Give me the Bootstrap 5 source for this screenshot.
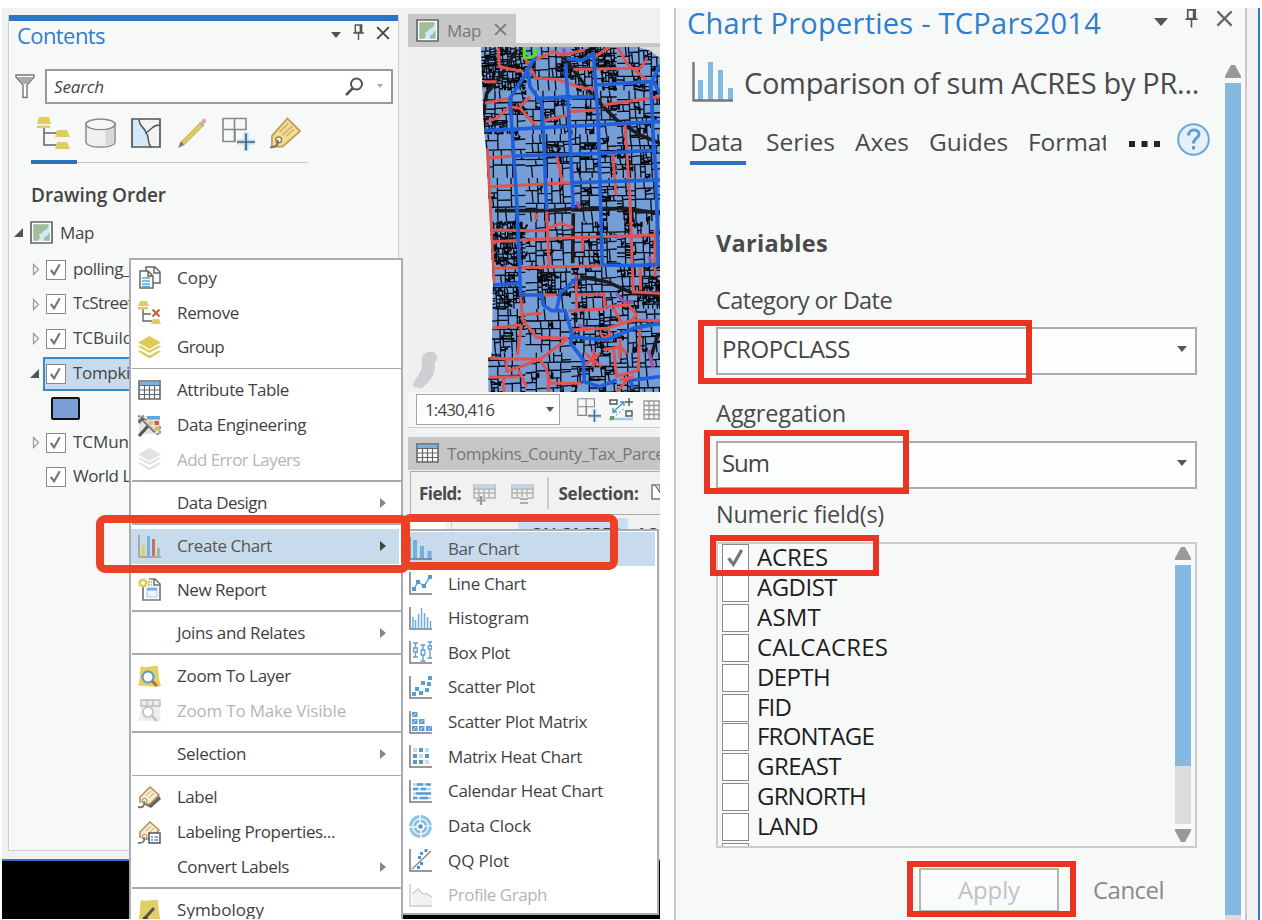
<!DOCTYPE html>
<html lang="en">
<head>
<meta charset="utf-8">
<meta name="viewport" content="width=device-width, initial-scale=1">
<title>Create Chart - Bar Chart</title>
<link href="https://cdn.jsdelivr.net/npm/bootstrap@5.3.0/dist/css/bootstrap.min.css" rel="stylesheet">
<style>
body{width:1262px;height:920px;overflow:hidden;background:#fff;font-family:"Open Sans","Noto Sans",sans-serif;font-size:17px;line-height:1;color:#444}
svg{display:block;flex:none}
[data-w]{white-space:pre;display:inline-block}
.desk{width:658px;height:911px;margin:8px 0 0 2px;background:#000}
.app{height:851px;background:#f1f1f1;padding:6px 0 0 6px;gap:9px}
.app-edge{height:2px;background:#2f75c8}
.contents{width:391px;height:836px;background:#f7f9f9;border:1px solid #cfcfcf;border-top:0;margin-top:1px}
.accent{height:6px;background:#2f73c6}
.c-title{height:31px;padding:0 8px 4px}
.c-title>span{font-size:22px;color:#2f7dcb}
.c-search{height:34px;margin:17px 5px 0 6px}
.searchbox{width:348px;height:35px;border:2px solid #999;background:#fff;padding:0 8px 0 7px}
.tools{width:277px;margin:14px 0 0 22px;height:46px;padding-left:6px;border-bottom:1px solid #c6c6c6;gap:14.6px;position:relative}
.tools::after{content:"";position:absolute;left:0;bottom:-2px;width:46px;height:4px;background:#2c73ba}
.heading{margin:17px 0 0 22px;height:30px;font-size:19px;font-weight:600}
.tree-row{height:34.6px;padding-left:23px;color:#444}
.tree-name{margin-left:7px;width:58px;height:26px;line-height:24px;white-space:nowrap}
.tree-sel{margin-left:34px;width:90px;height:34px;border:2px solid #3a8acb;background:#c8dbed;padding-left:1px}
.cbx{width:20px;height:20px;border:1.6px solid #888;background:#fff;flex:none}
.swatch{width:29px;height:23px;border:2px solid #111;border-radius:2px;background:#7d9fd6;margin-left:42px}
.mapcol{width:252px}
.maptab{width:108px;height:29px;background:#c8c8c8;padding:3px 0 0 8px;color:#777}
.mapline{height:4px;background:#c8c8c8}
.maptools{height:36px;background:#f6f8f8;border-bottom:1px solid #ccc;padding-left:8px}
.scale{width:144px;height:31px;background:#fff;border:1.5px solid #a5a5a5;padding:0 9px 0 8px}
.tbltab{height:33px;margin-top:9px;background:#c6c6c6;padding-left:8px;color:#777;overflow:hidden}
.fieldbar{height:44px;margin:1px 0 0 2px;border:1.5px solid #aaa;border-right:0;padding-left:8px;font-weight:700;overflow:hidden;color:#4a4a4a}
.heads{height:60px;margin:3px 0 0 3px;font-weight:600;color:#333}
.heads>div{padding-top:7px;height:40px;white-space:nowrap;flex:none}
.menu{position:absolute;background:#fff;border:2px solid #a8adb3}
.menu1{left:127px;top:250px;width:274px;height:661px;overflow:hidden;padding-top:.6px;border-bottom:0}
.menu2{left:399px;top:521px;width:258px;height:386px;padding-top:.6px}
.mi{height:34.65px;padding:0 15px 0 7px;gap:16px;color:#3f3f3f}
.menu2 .mi{padding-left:6px}
.mi>span{margin-top:-1px}
.mi>i{width:23px;flex:none}
.mi.off{color:#b5b5b5}
.mi.on{background:#c8dbec;margin-right:2px;padding-right:13px;color:#555}
.mi .arr{margin-left:auto;border:5px solid transparent;border-left:6px solid #888;border-right:0}
.mi.on .arr{border-left-color:#444}
.rule{height:8.66px;padding:3px 0 0 1px}
.rule::before{content:"";display:block;height:1.6px;background:#aaa}
.hl{position:absolute;border:8px solid #ed4127;border-radius:9px}
.tri{border:6px solid transparent;border-top:6px solid #555;border-bottom:0}
.props{width:586px;height:912px;margin:8px 0 0 14px}
.pane{width:573px;background:#f7f9f9;border:solid #cacaca;border-width:0 2px}
.edge{width:13px;background:#f2f2f4;border-right:2px solid #2f7dcb}
.hl2{position:absolute;border:6px solid #ea3323}
.p-title{height:32px;padding:0 0 4px 11px;color:#2f7dcb;font-size:29px}
.p-main{width:549px}
.p-head{height:78px;padding:0 0 0 16px;font-size:29px;color:#4a4a4a}
.p-tabs{height:48px;margin-left:14px;font-size:24.5px;color:#4a4a4a;position:relative}
.p-tabs::after{content:"";position:absolute;left:0;top:43px;width:56px;height:4px;background:#2b72bd}
.p-tabs .fmt{width:78px;overflow:hidden;height:36px;line-height:36px}
.lbl{margin-left:40px;font-size:23.5px;color:#4a4a4a;white-space:nowrap}
.sel{width:481px;height:48px;margin-left:40px;border:2px solid #acacac;background:#fcfdfd;font-size:24px;padding:0 8px 4px 4px;position:relative}
.fields{width:481px;height:306px;margin-left:40px;border:2px solid #ccc;position:relative}
.fbox{height:302px;overflow:hidden;padding-left:4px;font-size:24px;color:#1e1e1e}
.frow{height:29.85px;gap:8px}
.frow>b{width:27px;height:28px;border:1.7px solid #8a8a8a;background:#fff;flex:none;margin-top:-1px}
.frow>span{margin-top:-3px}
.vbar{width:16px;background:#85b9e2}
.apply{width:140px;height:44px;border:2px solid #b5b5b5;background:#fafcfc;font-size:24px;color:#c2c2c2;margin-left:243px}
</style>
</head>
<body class="d-flex">

<svg width="0" height="0" class="position-absolute" aria-hidden="true">
<defs>
<symbol id="mapi" viewBox="0 0 23 23"><path d="M1 1h21v21H1z" fill="#fff" stroke="#666" stroke-width="1.7"/><path d="M3.300 3.300h16.400v16.400H3.300z" fill="#d3e8f5"/><path d="M3.300 3.300H19l-2 5-4 2-1 2-3 1 1 3-2 3.400H3.300zM14 19.700v-3l3-2 2.700-4v9z" fill="#9fbf9a"/></symbol>
<symbol id="pin" viewBox="0 0 12 15"><path d="M3 1h6v7H3zM1 8.500h10M6 9v6M7.700 1v7" fill="none" stroke="#555" stroke-width="1.300"/></symbol>
<symbol id="xx" viewBox="0 0 12 12"><path d="M1 1l10 10M11 1L1 11" fill="none" stroke="currentColor" stroke-width="1.600"/></symbol>
<symbol id="tick" viewBox="0 0 18 18"><path d="M4 9.500l3.500 4.500L13.500 3.500" fill="none" stroke="#777" stroke-width="2.300"/></symbol>
<symbol id="open" viewBox="0 0 11 11"><path d="M10 1v9H1z" fill="#555"/></symbol>
<symbol id="closed" viewBox="0 0 8 13"><path d="M1.500 1.500v10l5-5z" fill="none" stroke="#999" stroke-width="1.200"/></symbol>
<symbol id="gridplus" viewBox="0 0 33 33"><path d="M1 1h23v11H1zM1 12h12v12H1zM12.500 1v23" fill="none" stroke="#888" stroke-width="1.600"/><path d="M24 15v18M15 24.500h18" stroke="#b7dcf5" stroke-width="5"/><path d="M24 16v17M15 24.500h18" stroke="#44667c" stroke-width="1.700"/></symbol>
<symbol id="table" viewBox="0 0 23 23"><path d="M1 2h21v18H1z" fill="#fff" stroke="#666" stroke-width="1.600"/><path d="M2 3h19v3H2z" fill="#74b3e3"/><path d="M1 6.500h21M1 11h21M1 15.500h21M6.500 6.500V20M11.500 6.500V20M16.500 6.500V20" stroke="#666" stroke-width="1.200"/></symbol>
<symbol id="stack" viewBox="0 0 23 23"><path d="M11.500 0L23 6.500 11.500 13 0 6.500zM0 10.500l2.500-1 9 5 9-5 2.500 1L11.500 17zM0 15.500l2.500-1 9 5 9-5 2.500 1L11.500 22.500z" fill="currentColor"/></symbol>
<symbol id="axis" viewBox="0 0 23 23"><path d="M1 0v22h22" fill="none" stroke="#777" stroke-width="1.500"/></symbol>
<symbol id="tag" viewBox="0 0 33 33"><path d="M3 19v11h11L32 14 19 1z" fill="#f0dc93" stroke="#c29a55" stroke-width="1.800"/><path d="M11 15l9-9M14 18l10-9M18 19l8-7" stroke="#c9ab68" stroke-width="1.300"/><circle cx="10" cy="23" r="3" fill="#fff" stroke="#a0763a" stroke-width="1.500"/><path d="M9 23c1 6-3 8-8 8" fill="none" stroke="#777" stroke-width="2"/></symbol>
</defs>
</svg>

<div class="desk position-relative flex-shrink-0">
 <div class="app d-flex">
  <section class="contents flex-shrink-0">
   <div class="accent"></div>
   <div class="c-title d-flex align-items-center"><span data-w="88">Contents</span>
    <div class="ms-auto d-flex align-items-center"><div class="tri" style="border-width:6px 5.5px 0"></div><svg width="13" height="16" style="margin:0 11px 5px"><use href="#pin"/></svg><svg width="14" height="14" style="margin-bottom:3px"><use href="#xx"/></svg></div>
   </div>
   <div class="c-search d-flex align-items-center justify-content-between">
    <svg width="20" height="25" viewBox="0 0 20 25"><path d="M1 1h18v2l-7 8v12.500H8V11L1 3z" fill="#fff" stroke="#777" stroke-width="1.400"/><path d="M2 3h16l-6 7H8z" fill="#aaa"/></svg>
    <div class="searchbox d-flex align-items-center"><em data-w="50">Search</em>
     <svg class="ms-auto" width="19" height="19" viewBox="0 0 19 19"><circle cx="11.500" cy="7" r="5.500" fill="none" stroke="#555" stroke-width="2"/><path d="M8 11l-7 7" stroke="#555" stroke-width="2.600"/></svg>
     <div class="tri" style="border-width:4px 3.5px 0;border-top-color:#aaa;margin-left:13px"></div></div>
   </div>
   <div class="tools d-flex">
    <svg width="33" height="33" viewBox="0 0 33 33"><path d="M7 11v17h13M7 16h13" fill="none" stroke="#666" stroke-width="1.600"/><path d="M2 0h10l2 7H0zM0 8.500h13v2.500H0zM20 13h10l3 7H18zM20 25h10l3 7H18z" fill="#e0cd62"/></svg>
    <svg width="31" height="33" viewBox="0 0 32 33"><path d="M1 6v20c3 6 27 6 30 0V6z" fill="#f0f0f0" stroke="#888" stroke-width="1.500"/><path d="M21 11v18c5 0 9-2 9-3V7z" fill="#d8d8d8"/><ellipse cx="16" cy="7" rx="15" ry="5.500" fill="#f6f6f6" stroke="#888" stroke-width="1.500"/></svg>
    <svg width="31" height="33" viewBox="0 0 31 33" style="margin-left:1px"><path d="M1 2h28v28H1z" fill="#f3f3f3"/><path d="M1 2h7c0 8 6 8 7 14 4 3-2 8 5 14H1z" fill="#d3e9f8"/><path d="M8 2c0 8 6 8 7 14 4 3 0 8 5 14M15 16l6-5c2-2 6-3 8-3" fill="none" stroke="#555" stroke-width="1.500"/><path d="M1 2h28v28H1z" fill="none" stroke="#555" stroke-width="1.700"/></svg>
    <svg width="31" height="33" viewBox="0 0 31 33"><path d="M4 25L23 6l3 3L7 28z" fill="#e0cc5c" stroke="#c8b04a"/><path d="M24 5l2-3c2-1 4 1 3 3l-3 3z" fill="#e3a29a"/><path d="M22.500 5.500l4 4" stroke="#aaa" stroke-width="2"/><path d="M4 24l-3 7 6-3z" fill="#777"/></svg>
    <svg width="33" height="34" style="margin-right:-1px"><use href="#gridplus"/></svg>
    <svg width="32" height="33"><use href="#tag"/></svg>
   </div>
   <div class="heading d-flex align-items-center"><span data-w="135">Drawing Order</span></div>
   <div class="d-flex align-items-center" style="height:41.5px;padding:1px 0 0 4px;margin-top:1px"><svg width="11" height="11"><use href="#open"/></svg><svg class="ms-2" style="margin-left:6px!important" width="23" height="23"><use href="#mapi"/></svg><span style="margin-left:7px" data-w="34">Map</span></div>
   <div class="tree-row d-flex align-items-center"><svg width="8" height="13"><use href="#closed"/></svg><div class="cbx" style="margin-left:6px"><svg width="17" height="17"><use href="#tick"/></svg></div><div class="tree-name"><span data-w="57">polling_</span></div></div>
   <div class="tree-row d-flex align-items-center"><svg width="8" height="13"><use href="#closed"/></svg><div class="cbx" style="margin-left:6px"><svg width="17" height="17"><use href="#tick"/></svg></div><div class="tree-name"><span data-w="60">TcStreet</span></div></div>
   <div class="tree-row d-flex align-items-center"><svg width="8" height="13"><use href="#closed"/></svg><div class="cbx" style="margin-left:6px"><svg width="17" height="17"><use href="#tick"/></svg></div><div class="tree-name"><span data-w="60">TCBuild</span></div></div>
   <div class="tree-row d-flex align-items-center position-relative" style="padding-left:0"><svg width="11" height="11" class="position-absolute" style="left:20px"><use href="#open"/></svg><div class="tree-sel d-flex align-items-center"><div class="cbx"><svg width="17" height="17"><use href="#tick"/></svg></div><div class="tree-name"><span data-w="57">Tompki</span></div></div></div>
   <div class="tree-row d-flex align-items-center" style="padding-left:0"><div class="swatch"></div></div>
   <div class="tree-row d-flex align-items-center"><svg width="8" height="13"><use href="#closed"/></svg><div class="cbx" style="margin-left:6px"><svg width="17" height="17"><use href="#tick"/></svg></div><div class="tree-name"><span data-w="56">TCMun</span></div></div>
   <div class="tree-row d-flex align-items-center" style="padding-left:37px"><div class="cbx"><svg width="17" height="17"><use href="#tick"/></svg></div><div class="tree-name"><span data-w="58">World L</span></div></div>
  </section>

  <section class="mapcol flex-shrink-0">
   <div class="maptab d-flex align-items-center"><svg width="23" height="23"><use href="#mapi"/></svg><span class="ms-2" data-w="34">Map</span><svg width="13" height="13" style="margin:-2px 0 0 13px"><use href="#xx"/></svg></div>
   <div class="mapline"></div>
   <svg id="map" width="252" height="345" viewBox="24 141 756 1035">
    <defs><clipPath id="county"><path d="M243 141H715L750 152 780 174V1176H265V1072H275L279 850 258 450 250 360z"/></clipPath></defs>
    <path d="M24 141h756v1035H24z" fill="#f0f0f0"/><path d="M700 141h80v60z" fill="#dcdcdc"/>
    <path d="M40 1160c-4-20 30-40 25-70-2-30 15-38 35-34 15 8 14 20 4 35 5 30-14 54-40 74z" fill="#cfcfd3"/>
    <g clip-path="url(#county)">
     <path d="M240 141h540v1035H240z" fill="#759ed6"/>
     <path id="parcels" fill="none" stroke="#080c14" stroke-width="4"/>
     <path id="dense" fill="none" stroke="#05070c" stroke-width="6"/>
     <g fill="none" stroke="#1c1c1c" stroke-width="11"><path d="M250 345l10-65 40-50 50-80M490 170l90 120 70 70 70 45 60 25M285 632l165 0 70-6 160 0 100 14M520 640l-2 150M540 830l80 15 80 35 80 5M775 1000l-25 80"/></g>
     <g fill="none" stroke="#a04fa8" stroke-width="10"><path d="M650 880q20 35 50 25M535 975l30 15M530 605l10 20M490 145l5 20M745 770l10 15M745 1050l15 55"/></g>
     <g fill="none" stroke="#e2524f" stroke-width="9" stroke-linejoin="round">
      <path d="M262 445l20 405M250 245h40M295 145l3 55 72 15M255 310l75-15M258 365l32-10 40-35M400 235l70 3 80 27h35M405 180l55-25 30 10 65-15M520 208l200-3 20-27M655 145l25 45 60 50M610 315l170-25M330 320l30 5 50 55M430 362l75-17M508 335l77-5M360 320l30-30M375 175l30 55M585 170l45-30M675 375l15 225 10 280M263 475l77-7M270 560l245-12M470 465l17 83M638 455l10 130M275 690l155 2 50-22 40 12M280 725l190-10 295-10M280 805l330-8M440 635l7 160M548 715v38M720 795l2 75M700 875l80 5M765 690v140M408 640v20"/>
      <path d="M362 890l6 70 42 52 95 3M278 985l85-10M528 825l2 100M530 885l82-3 3 40M615 920l70-5 25 30-20 20M505 932l110-5M430 885h40M365 945l60-5M505 1015l-85 63-100 37 0-40M268 1075l152 3 20 32 10 40 95 0M268 1132l87-2M365 975l-13 90M515 990l105-5 80-25 80 2M640 1040l10 90 65-20 5-125M310 1130l2 46M355 1110l25 50M445 1120v56M640 925l30 50M555 1060l50 40M580 1050v50M600 1060l-45 35M610 1050l50-10 20 20M660 1140l40-10M690 1130l-40 46M600 995l10 20 20-10-5-20M660 1015v60"/></g>
     <g fill="none" stroke="#2060dc" stroke-width="11" stroke-linejoin="round"><path d="M580 155l15 215 12 425 83 2 90-4M497 190l11 180 12 255M408 165l-33 60-45 70 5 75 15 230 12 285h63l5 30 25 17h40l20 65-3 33 38 50 3 65 47 15 50-20M385 215l5 45 35 50 5 80 10 240M412 295l168-5M255 392l175-9 350-18M340 468l260-8 170-10M520 548l260-8M500 175l45 7 35-20M585 255l170-10 25-50M752 245l8 175 8 100 7 270M755 235l25 45M280 855l80-5M530 835l-50 45-10 50M515 1010l105 10 80-35 80-15M690 1140l10 25M700 1140l80-10"/></g>
    </g>
    <path d="M373 141v32h18l15-8v-24" fill="none" stroke="#52e51c" stroke-width="9"/>
   </svg>
   <div class="maptools d-flex align-items-center overflow-hidden"><div class="scale d-flex align-items-center justify-content-between flex-shrink-0"><span data-w="69">1:430,416</span><div class="tri" style="border-width:5px 4px 0;margin-right:-4px"></div></div>
    <div style="width:2px;height:21px;background:#bbb;margin:0 11px 0 6px"></div>
    <svg width="24" height="24"><use href="#gridplus"/></svg>
    <svg width="25" height="23" viewBox="0 0 25 23" style="margin:0 9px 0 8px"><path d="M1 2h7v4H1zM17 13h6v5h-6zM20 0v8M16 4h8" fill="none" stroke="#555" stroke-width="1.400"/><path d="M4 14L15 4M4 10v4h4M11 4h4v4" fill="none" stroke="#3e95cf" stroke-width="1.300"/><path d="M4 20L16 10" stroke="#777" stroke-dasharray="2 2"/><path d="M0 21h24" stroke="#9ccdf0" stroke-width="2.500"/><path d="M1 18h4v4H1z" fill="#6b9c5f"/></svg>
    <svg width="22" height="20" viewBox="0 0 22 20"><path d="M1 1h20v18H1zM1 5.500h20M1 10h20M1 14.500h20M6 1v18M11 1v18M16 1v18" fill="none" stroke="#999" stroke-width="1.300"/></svg></div>
   <div class="tbltab d-flex align-items-center"><svg width="23" height="23"><use href="#table"/></svg><span class="ms-2" data-w="229">Tompkins_County_Tax_Parcels</span></div>
   <div class="fieldbar d-flex align-items-center"><span data-w="42">Field:</span>
    <svg width="23" height="23" class="flex-shrink-0" style="margin-left:12px" viewBox="0 0 23 23"><path d="M1 3h21v13H1zM1 7h21M1 11h21M6 7v9M11 7v9M16 7v9" fill="none" stroke="#b2b2b2" stroke-width="1.500"/><path d="M1 2h21v4H1z" fill="#bfd5e8"/><path d="M8 14v9M3.500 18.500h9" stroke="#999" stroke-width="2.200"/></svg>
    <svg width="23" height="23" style="margin-left:15px" viewBox="0 0 23 23"><path d="M1 3h21v13H1zM1 7h21M1 11h21M6 7v9M11 7v9M16 7v9" fill="none" stroke="#b2b2b2" stroke-width="1.500"/><path d="M1 2h21v4H1z" fill="#bfd5e8"/><path d="M9 15h8v7H9z" fill="#f1f1f1"/><path d="M9 17h8M9 21h8" stroke="#999" stroke-width="1.600"/></svg>
    <div style="width:1.500px;height:32px;background:#ccc;margin:0 10px 0 13px;flex:none"></div><span data-w="80">Selection:</span>
    <svg width="20" height="20" style="margin-left:12px" viewBox="0 0 20 20"><path d="M1 2h19v14H1z" fill="#fff" stroke="#777" stroke-width="1.500"/><path d="M4 2l5 8V3" fill="#bfe0f5" stroke="#555"/></svg></div>
   <div class="heads d-flex"><div class="bg-white" style="width:34px"></div><div style="width:67px;border-left:1px solid #ccc;margin-left:6px"></div><div style="width:110px;background:#c8dff3;padding-left:12px"><span data-w="90">CALCACRES</span></div><div style="padding-left:8px;width:30px"><span data-w="20">AC</span></div></div>
  </section>
 </div>
 <div class="app-edge"></div>

 <nav class="menu menu1">
  <div class="mi d-flex align-items-center"><svg width="23" height="23" viewBox="0 0 23 23"><path d="M8 1h9l5 5v11H8zM16 1v6h6" fill="#fff" stroke="#666" stroke-width="1.500"/><path d="M2 5h8l5 5v12H2zM10 5v5h5" fill="#fff" stroke="#666" stroke-width="1.500"/><path d="M4 12h8M4 15h8M4 18h8M4 20.500h8" stroke="#5ba6dc" stroke-width="1.300"/></svg><span data-w="40">Copy</span></div>
  <div class="mi d-flex align-items-center"><svg width="23" height="23" viewBox="0 0 23 23"><path d="M5 8v12h9M5 13h8" fill="none" stroke="#666" stroke-width="1.400"/><path d="M2 0h7l2 5H0zM0 6h10v2.500H0zM15 18h6l2 5H13z" fill="#e0cd5b"/><path d="M14.500 8.500l7 7M21.500 8.500l-7 7" stroke="#cc5a38" stroke-width="2"/></svg><span data-w="62">Remove</span></div>
  <div class="mi d-flex align-items-center"><svg width="23" height="23" style="color:#dfca55"><use href="#stack"/></svg><span data-w="47">Group</span></div>
  <div class="rule"></div>
  <div class="mi d-flex align-items-center"><svg width="23" height="23"><use href="#table"/></svg><span data-w="112">Attribute Table</span></div>
  <div class="mi d-flex align-items-center"><svg width="23" height="23" viewBox="0 0 23 23"><path d="M1 2h21v18H1z" fill="#e4e4e4"/><path d="M1 8V2h5M22 12v8h-5" fill="none" stroke="#777" stroke-width="1.500" stroke-dasharray="3 1.500"/><path d="M9 2h13v3.500H9z" fill="#5fa8de"/><path d="M11 7h4v3.500h-4z" fill="#e4c84f"/><path d="M16.500 7H21v4h-4.500z" fill="#d9573c"/><path d="M17 12.500h4.500v4H17z" fill="#d4bd4f"/><path d="M1 22L10 12" stroke="#555" stroke-width="3"/><path d="M3 4l14 14M1 9l3-5 4 3" fill="none" stroke="#666" stroke-width="2.500"/><path d="M6 6l11 11" stroke="#ccc" stroke-width="1.200"/></svg><span data-w="129">Data Engineering</span></div>
  <div class="mi off d-flex align-items-center"><svg width="23" height="23" style="color:#e2e2e2"><use href="#stack"/></svg><span data-w="123">Add Error Layers</span></div>
  <div class="rule"></div>
  <div class="mi d-flex align-items-center"><i></i><span data-w="90">Data Design</span><div class="arr"></div></div>
  <div class="rule"></div>
  <div class="mi on d-flex align-items-center"><svg width="23" height="23" viewBox="0 0 23 23"><path d="M3.500 10h3.500v11h-3.500z" fill="#e3cd5b"/><path d="M9 1h3v20H9z" fill="#74b1e0"/><path d="M14 4h3v17h-3z" fill="#c67257"/><path d="M19 13h3v8h-3z" fill="#9dc094"/><path d="M1 0v22h22" fill="none" stroke="#999" stroke-width="1.500"/></svg><span data-w="95">Create Chart</span><div class="arr"></div></div>
  <div class="rule"></div>
  <div class="mi d-flex align-items-center"><svg width="23" height="23" viewBox="0 0 23 23"><path d="M5 9v13h17V6l-5-5h-6M16 1v6h6" fill="none" stroke="#777" stroke-width="1.700"/><path d="M9 11h10v8H9z" fill="#eef5fb" stroke="#a8c3d8"/><path d="M9 9.500h10v3H9z" fill="#6eb3e6"/><path d="M10 4h4M10 7h4" stroke="#777" stroke-dasharray="2 1"/><circle cx="5" cy="5" r="3" fill="#fff" stroke="#dfc94f" stroke-width="2"/><circle cx="5" cy="5" r="4.500" fill="none" stroke="#dfc94f" stroke-width="1.200" stroke-dasharray="1.500 2"/></svg><span data-w="89">New Report</span></div>
  <div class="rule"></div>
  <div class="mi d-flex align-items-center"><i></i><span data-w="128">Joins and Relates</span><div class="arr"></div></div>
  <div class="rule"></div>
  <div class="mi d-flex align-items-center"><svg width="23" height="23" viewBox="0 0 23 23"><path d="M3 1c6 3 12-1 17 0 0 8 1 14 3 20-8 2-16-1-23 0 3-7 1-14 3-20z" fill="#e2cf64"/><circle cx="10" cy="12" r="5.500" fill="#fff" stroke="#5599d0" stroke-width="2"/><path d="M14 16l5 5" stroke="#a86d43" stroke-width="2.600"/></svg><span data-w="114">Zoom To Layer</span></div>
  <div class="mi off d-flex align-items-center"><svg width="23" height="23" viewBox="0 0 23 23"><path d="M3 1c6 0 12 0 19 0v9c0 4 0 8 1 12-8 1-16-1-23 0 3-7 3-14 3-21z" fill="#ededed"/><path d="M3 1h19v6H3zM9 1v6M15 1v6" fill="none" stroke="#bcbcbc" stroke-width="1.400"/><circle cx="10" cy="13" r="5" fill="#fff" stroke="#c2c2c2" stroke-width="1.700"/><path d="M14 17l5 5" stroke="#bbb" stroke-width="2"/></svg><span data-w="169">Zoom To Make Visible</span></div>
  <div class="rule"></div>
  <div class="mi d-flex align-items-center"><i></i><span data-w="69">Selection</span><div class="arr"></div></div>
  <div class="rule"></div>
  <div class="mi d-flex align-items-center"><svg width="23" height="23" viewBox="0 0 23 23"><path d="M5 18l8 4 10-9-2-3" fill="#666"/><path d="M2 17v-6L12 1l9 8-9 9H8" fill="#f7ead0" stroke="#b98c4e" stroke-width="1.500"/><path d="M8 10l5-5M11 12l5-5" stroke="#c9a56b"/><circle cx="6.500" cy="15" r="2.500" fill="#fff" stroke="#a07a46"/><path d="M6 15c1 5-1 7-6 6" fill="none" stroke="#777" stroke-width="1.800"/></svg><span data-w="40">Label</span></div>
  <div class="mi d-flex align-items-center"><svg width="23" height="23" viewBox="0 0 23 23"><path d="M2 17v-6L12 1l9 8-9 9H8" fill="#f7ead0" stroke="#b98c4e" stroke-width="1.500"/><path d="M8 10l5-5M11 12l5-5" stroke="#c9a56b"/><circle cx="6.500" cy="16" r="2.500" fill="#fff" stroke="#a07a46"/><path d="M6 16c1 5-1 6-6 6" fill="none" stroke="#777" stroke-width="1.800"/><path d="M11 12h11v10H11z" fill="#fff" stroke="#555" stroke-width="1.500"/><path d="M13 16h2M16.500 16H20M13 19h2M16.500 19H20" stroke="#4a9ad8" stroke-width="1.500"/></svg><span data-w="158">Labeling Properties...</span></div>
  <div class="mi d-flex align-items-center"><i></i><span data-w="112">Convert Labels</span><div class="arr"></div></div>
  <div class="rule"></div>
  <div class="mi d-flex align-items-center"><svg width="23" height="23" viewBox="0 0 23 23"><path d="M3 1c6 2 12-1 17 0 0 8 1 14 3 21H0c3-7 1-14 3-21z" fill="#e2cf64"/><path d="M8 18l8-9" stroke="#555" stroke-width="3"/><path d="M3 22c2-1 1-5 5-5l2 2c-1 3-4 3-7 3z" fill="#444"/></svg><span data-w="87">Symbology</span></div>
 </nav>

 <nav class="menu menu2">
  <div class="mi on d-flex align-items-center"><svg width="23" height="23" viewBox="0 0 23 23"><path d="M4 3h4v19H4zM11 9h4v13h-4zM18.500 14h4v8h-4z" fill="#74b0de"/><use href="#axis"/></svg><span data-w="71">Bar Chart</span></div>
  <div class="mi d-flex align-items-center"><svg width="23" height="23" viewBox="0 0 23 23"><use href="#axis"/><path d="M5 17l4-7 6 4 6-9" fill="none" stroke="#64a0cf" stroke-width="1.500"/><path d="M3 15h4v4H3zM7 8h4v4H7zM13 12h4v4h-4zM19 3h4v4h-4z" fill="#5598cf"/></svg><span data-w="78">Line Chart</span></div>
  <div class="mi d-flex align-items-center"><svg width="23" height="23" viewBox="0 0 23 23"><use href="#axis"/><path d="M4 10v12M6.500 13v9M9.500 7v15M12.500 1v21M15.500 6v16M18.500 10v12M21.500 14v8" stroke="#6facdc" stroke-width="1.500"/></svg><span data-w="81">Histogram</span></div>
  <div class="mi d-flex align-items-center"><svg width="23" height="23" viewBox="0 0 23 23"><use href="#axis"/><path d="M6.500 2v14M4 2h5M4 16h5M14 4v16M11.500 4h5M11.500 20h5M21 1v16M18.500 1H23M18.500 17H23" stroke="#5f9fd0" stroke-width="1.400"/><path d="M4.700 7h3.600v4H4.700zM12.200 9h3.600v5h-3.600zM19.200 5h3.600v3h-3.600z" fill="#fff" stroke="#5f9fd0" stroke-width="1.300"/></svg><span data-w="62">Box Plot</span></div>
  <div class="mi d-flex align-items-center"><svg width="23" height="23" viewBox="0 0 23 23"><use href="#axis"/><path d="M3 16h4v4H3zM6 11h4v4H6zM10 15h4v4h-4zM12 5h4v4h-4zM16 12h4v4h-4zM18 6h4v4h-4zM19 0h4v4h-4z" fill="#5c9ed3"/></svg><span data-w="87">Scatter Plot</span></div>
  <div class="mi d-flex align-items-center"><svg width="23" height="23" viewBox="0 0 23 23"><use href="#axis"/><path d="M3 1h5.500v5H3zM3 8h5.500v5H3zM3 15h5.500v5H3zM10 8h5.500v5H10zM10 15h5.500v5H10zM17 15h6v5h-6z" fill="#5c9ed3"/><path d="M4 5l3-3M4 12l3-3M4 19l3-3M11 12l3-3M11 19l3-3M19 19l3-3" stroke="#d2e8f8"/></svg><span data-w="139">Scatter Plot Matrix</span></div>
  <div class="mi d-flex align-items-center"><svg width="23" height="23" viewBox="0 0 23 23"><use href="#axis"/><path d="M4 3h4v4H4zM16 3h4v4h-4zM10 9h4v4h-4zM16 15h4v4h-4z" fill="#c4def1"/><path d="M10 3h4v4h-4zM4 9h4v4H4zM16 9h4v4h-4zM4 15h4v4H4zM10 15h4v4h-4z" fill="#5499d1"/></svg><span data-w="134">Matrix Heat Chart</span></div>
  <div class="mi d-flex align-items-center"><svg width="23" height="23" viewBox="0 0 23 23"><use href="#axis"/><path d="M4 4.500h18M4 9h18M4 13.500h18M4 18h18" stroke="#b7d8ee" stroke-width="2.400"/><path d="M8 4.500h6M17 4.500h5M4 9h5M12 9h5M7 13.500h15M4 18h4M11 18h8" stroke="#5a9fd3" stroke-width="2.400"/></svg><span data-w="155">Calendar Heat Chart</span></div>
  <div class="mi d-flex align-items-center"><svg width="23" height="23" viewBox="0 0 23 23"><circle cx="11.500" cy="11.500" r="10" fill="#e6f2fb" stroke="#8fc2e7" stroke-width="3" stroke-dasharray="14 1.700"/><circle cx="11.500" cy="11.500" r="5.500" fill="#fff" stroke="#86b9de" stroke-width="2.500" stroke-dasharray="7 1.600"/><circle cx="11.500" cy="11.500" r="2.200" fill="#4794d1"/></svg><span data-w="83">Data Clock</span></div>
  <div class="mi d-flex align-items-center"><svg width="23" height="23" viewBox="0 0 23 23"><use href="#axis"/><path d="M3 20L22 2" stroke="#888" stroke-width="1.400"/><path d="M8 17h3v3H8zM11 13h3v3h-3zM9 7h3v3H9zM11 3h3v3h-3zM15.500 0h3v3h-3z" fill="#4b95cf"/></svg><span data-w="61">QQ Plot</span></div>
  <div class="mi off d-flex align-items-center"><svg width="23" height="23" viewBox="0 0 23 23"><path d="M3 12l5-7 6 6h4l5 3v8H3z" fill="#f2f2f2"/><path d="M3 10l6-5 5 5h4l5 3M1 0v22h22" fill="none" stroke="#ccc" stroke-width="1.500"/></svg><span data-w="99">Profile Graph</span></div>
 </nav>
 <div class="hl" style="left:94px;top:507px;width:314px;height:58px"></div>
 <div class="hl" style="left:399px;top:506px;width:217px;height:56px"></div>
</div>

<div class="props d-flex flex-shrink-0 position-relative">
 <section class="pane">
  <div class="p-title d-flex align-items-center"><span data-w="414">Chart Properties - TCPars2014</span>
   <div class="tri" style="border-width:8px 7.5px 0;margin:0 0 0 53px"></div><svg width="15" height="20" style="margin:-8px 0 0 16px"><use href="#pin"/></svg><svg width="17" height="17" style="margin:-8px 0 0 17px;color:#666"><use href="#xx"/></svg></div>
  <div class="d-flex">
   <div class="p-main">
    <div class="p-head d-flex align-items-center"><svg width="41" height="40" viewBox="0 0 41 40" style="margin-top:6px"><path d="M6 18h5v20H6zM16 0h5v38h-5zM26 8h5v30h-5zM36 26h5v12h-5z" fill="#80b9e2"/><path d="M1.500 0v38.500H41" fill="none" stroke="#777" stroke-width="2.400"/></svg><span data-w="455" style="margin:6px 0 0 11px">Comparison of sum ACRES by PR...</span></div>
    <div class="p-tabs d-flex align-items-center"><span data-w="53">Data</span><span data-w="69" style="margin-left:23px">Series</span><span data-w="54" style="margin-left:20px">Axes</span><span data-w="79" style="margin-left:20px">Guides</span><div class="fmt" style="margin-left:20px"><span data-w="82">Format</span></div>
     <svg width="32" height="6" viewBox="0 0 32 6" style="margin:4px 0 0 23px"><path d="M0 0h6v6H0zM12.500 0h6v6h-6zM25 0h6v6h-6z" fill="#222"/></svg>
     <svg width="33" height="33" viewBox="0 0 33 33" style="margin:-5px 0 0 16px"><circle cx="16.500" cy="16.500" r="15.300" fill="#e5f1fa" stroke="#69a9d8" stroke-width="2"/><path d="M11.500 12.500c0-7 10.500-7 10.500-1.500 0 4.500-5.500 4-5.500 9.500" fill="none" stroke="#5c9fd2" stroke-width="3"/><path d="M15 23h3v3.500h-3z" fill="#5c9fd2"/></svg></div>
    <div class="lbl fw-bold d-flex align-items-center" style="height:40px;margin-top:58px"><span data-w="112">Variables</span></div>
    <div class="lbl d-flex align-items-center" style="height:40px;margin-top:17px"><span data-w="176">Category or Date</span></div>
    <div class="sel d-flex align-items-center justify-content-between" style="margin-top:6px"><span data-w="128">PROPCLASS</span><div class="tri" style="border-width:6px 5px 0"></div><div class="hl2" style="left:-20px;top:-9px;width:334px;height:64px"></div></div>
    <div class="lbl d-flex align-items-center" style="height:40px;margin-top:19px"><span data-w="130">Aggregation</span></div>
    <div class="sel d-flex align-items-center justify-content-between" style="margin-top:7px"><span data-w="47">Sum</span><div class="tri" style="border-width:6px 5px 0"></div><div class="hl2" style="left:-14px;top:-13px;width:205px;height:64px"></div></div>
    <div class="lbl d-flex align-items-center" style="height:36px;margin-top:8px"><span data-w="168">Numeric field(s)</span></div>
    <div class="fields" style="margin-top:9px"><div class="d-flex"><div class="fbox flex-grow-1">
      <div class="frow d-flex align-items-center"><b><svg width="25" height="25"><use href="#tick"/></svg></b><span data-w="71">ACRES</span></div>
      <div class="frow d-flex align-items-center"><b></b><span data-w="80">AGDIST</span></div>
      <div class="frow d-flex align-items-center"><b></b><span data-w="64">ASMT</span></div>
      <div class="frow d-flex align-items-center"><b></b><span data-w="131">CALCACRES</span></div>
      <div class="frow d-flex align-items-center"><b></b><span data-w="73">DEPTH</span></div>
      <div class="frow d-flex align-items-center"><b></b><span data-w="34">FID</span></div>
      <div class="frow d-flex align-items-center"><b></b><span data-w="117">FRONTAGE</span></div>
      <div class="frow d-flex align-items-center"><b></b><span data-w="84">GREAST</span></div>
      <div class="frow d-flex align-items-center"><b></b><span data-w="109">GRNORTH</span></div>
      <div class="frow d-flex align-items-center"><b></b><span data-w="61">LAND</span></div>
      <div class="frow d-flex align-items-center"><b></b></div>
     </div>
     <div style="width:16px;margin-right:4px;padding-top:3px"><svg width="16" height="13" viewBox="0 0 16 13"><path d="M6 0h4l6 11v2H0v-2z" fill="#999"/></svg><div class="vbar" style="height:201px;margin-top:5px"></div><div style="height:58px;background:#dcdcdc"></div><svg width="16" height="13" viewBox="0 0 16 13" style="margin-top:5px"><path d="M0 0h16v2l-6 11H6L0 2z" fill="#999"/></svg></div></div>
     <div class="hl2" style="left:-8px;top:-9px;width:169px;height:41px"></div></div>
    <div class="d-flex align-items-center" style="margin-top:20px"><div class="apply d-flex align-items-center justify-content-center position-relative"><span data-w="62">Apply</span><div class="hl2" style="left:-14px;top:-9px;width:169px;height:56px"></div></div><span data-w="71" style="font-size:24px;color:#8a8a8a;margin-left:34px">Cancel</span></div>
   </div>
   <div style="width:16px;padding-top:25px"><svg width="16" height="13" viewBox="0 0 16 13"><path d="M6 0h4l6 11v2H0v-2z" fill="#999"/></svg><div class="vbar" style="height:832px;margin-top:5px"></div><div style="height:5px;background:#dcdcdc"></div></div>
  </div>
 </section>
 <div class="edge"></div>
</div>

<script src="https://cdn.jsdelivr.net/npm/bootstrap@5.3.0/dist/js/bootstrap.bundle.min.js"></script>
<script>
// Track each label out or in to its design width.
document.querySelectorAll('[data-w]').forEach(el => {
  const w = el.getBoundingClientRect().width;
  el.style.letterSpacing = ((+el.dataset.w - w) / el.textContent.length).toFixed(3) + 'px';
});
// Parcel outlines: split the county into ever smaller lots, with dense built-up clusters.
let seed = 71;
const rnd = () => (seed = (seed * 16807) % 2147483647) / 2147483647;
let lines = '', dense = '';
function split(x, y, w, h, min) {
  if (rnd() < .035) min = 10;
  if (Math.max(w, h) < min * (1 + rnd() * 1.5) || Math.min(w, h) < 7) {
    if (w * h < 420 && rnd() < .35) dense += `M${x|0} ${(y+h/2)|0}l${(w*rnd())|0} ${(h*.6*rnd())|0}l${(w*.5)|0} ${(-h*.7*rnd())|0}v${(h*rnd())|0}`;
    return;
  }
  const t = .22 + rnd() * .56;
  if (w > h * (.6 + rnd() * .8)) { const k = w * t; lines += `M${(x+k)|0} ${y|0}l${(rnd()*5)|0} ${h|0}`; split(x, y, k, h, min); split(x + k, y, w - k, h, min); }
  else { const k = h * t; lines += `M${x|0} ${(y+k)|0}l${w|0} ${-(rnd()*4)|0}`; split(x, y, w, k, min); split(x, y + k, w, h - k, min); }
}
for (let r = 0; r < 8; r++) for (let c = 0; c < 4; c++) split(240 + c * 137, 141 + r * 131, 137, 131, c > 1 ? 20 : 24);
document.getElementById('parcels').setAttribute('d', lines);
document.getElementById('dense').setAttribute('d', dense);
</script>
</body>
</html>
